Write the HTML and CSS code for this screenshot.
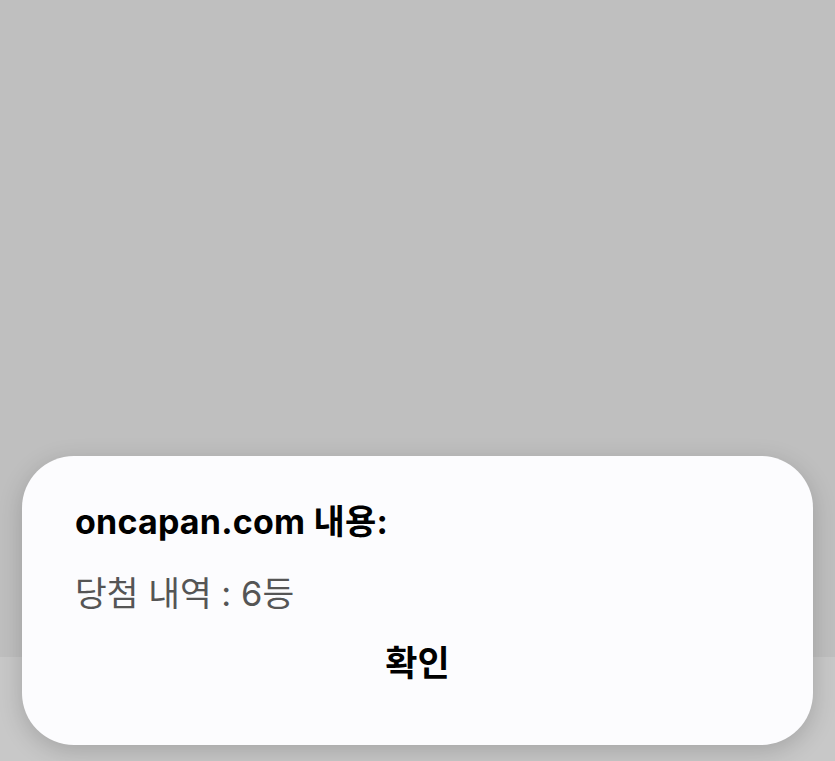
FILE: index.html
```html
<!DOCTYPE html>
<html lang="ko">
<head>
<meta charset="utf-8">
<link rel="stylesheet" href="styles.css">
</head>
<body>
<div class="screen">
  <div class="top"></div>
  <div class="bottom"></div>
  <div class="dialog">
    <div class="title">oncapan.com 내용:</div>
    <div class="message">당첨 내역 : 6등</div>
    <div class="actions"><span class="ok">확인</span></div>
  </div>
</div>
</body>
</html>
```
FILE: styles.css
```css
html, body {
  margin: 0;
  padding: 0;
}
body {
  width: 835px;
  height: 761px;
  overflow: hidden;
  font-family: "Inter", "Noto Sans CJK KR", sans-serif;
}
.screen {
  position: relative;
  width: 835px;
  height: 761px;
  display: flex;
  flex-direction: column;
}
.top {
  height: 657px;
  background: #bfbfbf;
}
.bottom {
  flex: 1;
  background: #c8c8c8;
}
.dialog {
  position: absolute;
  left: 22px;
  top: 456px;
  width: 791px;
  height: 289px;
  box-sizing: border-box;
  background: #fcfcfe;
  border-radius: 52px;
  box-shadow: 0 6px 24px rgba(0,0,0,0.18);
  padding: 43px 53px 0 53px;
  display: flex;
  flex-direction: column;
}
.title {
  font-size: 34px;
  font-weight: 700;
  color: #000;
  line-height: 46px;
  letter-spacing: 0.2px;
}
.message {
  margin-top: 26px;
  font-size: 34.5px;
  font-weight: 400;
  color: #555;
  line-height: 46px;
}
.actions {
  display: flex;
  justify-content: center;
  margin-top: 23px;
}
.ok {
  font-size: 35px;
  font-weight: 700;
  color: #000;
  line-height: 46px;
}
```
